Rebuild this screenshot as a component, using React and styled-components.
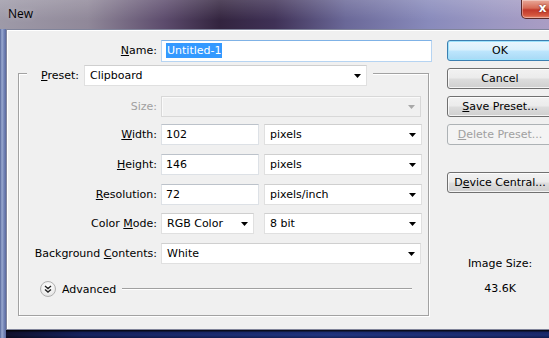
import React from 'react'
import styled, { createGlobalStyle, css } from 'styled-components'

const GlobalStyle = createGlobalStyle`
  html, body { margin: 0; padding: 0; overflow: hidden; }
  body { font-family: "DejaVu Sans", sans-serif; font-size: 11px; color: #000; }
  * { box-sizing: border-box; }
`

const Arrow = ({ disabled }) => (
  <svg width="7" height="4" viewBox="0 0 7 4">
    <polygon points="0,0 7,0 3.5,4" fill={disabled ? '#a8a8a8' : '#000'} />
  </svg>
)

const ChevronsDown = () => (
  <svg width="8" height="8" viewBox="0 0 8 8">
    <path d="M1 1 L4 3.5 L7 1 M1 4.5 L4 7 L7 4.5" fill="none" stroke="#222" strokeWidth="1.4" />
  </svg>
)

export default function App() {
  return (
    <>
      <GlobalStyle />
      <Window>
        <TitleBar>
          <Title>New</Title>
          <CloseButton>
            <CloseX>x</CloseX>
          </CloseButton>
        </TitleBar>
        <Client>
          <Form>
            <Row>
              <Label $w={150}><u>N</u>ame:</Label>
              <TextBox $w={271} $h={22} $focus>
                <Selected>Untitled-1</Selected>
              </TextBox>
            </Row>

            <Group>
              <GroupHeader>
                <span><u>P</u>reset:</span>
                <Select $w={283}>
                  <span>Clipboard</span>
                  <Arrow />
                </Select>
              </GroupHeader>

              <Row $top={10}>
                <Label $w={138} $disabled>Size:</Label>
                <Select $w={260} $disabled>
                  <span />
                  <Arrow disabled />
                </Select>
              </Row>
              <Row $top={7}>
                <Label $w={138}><u>W</u>idth:</Label>
                <TextBox $w={98}>102</TextBox>
                <Select $w={158} $gap={5}>
                  <span>pixels</span>
                  <Arrow />
                </Select>
              </Row>
              <Row $top={9}>
                <Label $w={138}><u>H</u>eight:</Label>
                <TextBox $w={98}>146</TextBox>
                <Select $w={158} $gap={5}>
                  <span>pixels</span>
                  <Arrow />
                </Select>
              </Row>
              <Row $top={9}>
                <Label $w={138}><u>R</u>esolution:</Label>
                <TextBox $w={98}>72</TextBox>
                <Select $w={158} $gap={5}>
                  <span>pixels/inch</span>
                  <Arrow />
                </Select>
              </Row>
              <Row $top={8}>
                <Label $w={138}>Color <u>M</u>ode:</Label>
                <Select $w={93}>
                  <span>RGB Color</span>
                  <Arrow />
                </Select>
                <Select $w={158} $gap={10}>
                  <span>8 bit</span>
                  <Arrow />
                </Select>
              </Row>
              <Row $top={9}>
                <Label $w={138}>Background <u>C</u>ontents:</Label>
                <Select $w={260}>
                  <span>White</span>
                  <Arrow />
                </Select>
              </Row>

              <Advanced>
                <RoundToggle><ChevronsDown /></RoundToggle>
                <span>Advanced</span>
                <Rule />
              </Advanced>
            </Group>
          </Form>

          <Side>
            <Button $default>OK</Button>
            <Button>Cancel</Button>
            <Button><u>S</u>ave Preset...</Button>
            <Button disabled><u>D</u>elete Preset...</Button>
            <Button $top={20}>D<u>e</u>vice Central...</Button>
            <Info>
              <InfoLine>Image Size:</InfoLine>
              <InfoLine $top={12}>43.6K</InfoLine>
            </Info>
          </Side>
        </Client>
      </Window>
    </>
  )
}

const Window = styled.div`
width: 549px;
height: 338px;
overflow: hidden;
display: flex;
flex-direction: column;
padding-bottom: 8px;
background:
  linear-gradient(90deg, #55669a 0, #9aaad0 2px, #7484b6 4px, #5a6aa0 6px) left top / 6px 100% no-repeat,
  linear-gradient(180deg, #1c1d28 0, #1c1d28 1px, #4c62a2 2px, #5f78b8 5px, #3c4c80 8px) left bottom / 100% 8px no-repeat,
  linear-gradient(90deg, #2c2038 0, #3c4c86 15%, #5a72b2 60%, #4a5c9a 100%) left bottom / 100% 8px no-repeat,
  #6676a8;
background-blend-mode: normal, multiply, normal, normal;
`
const TitleBar = styled.div`
height: 29px;
flex-shrink: 0;
display: flex;
justify-content: space-between;
align-items: flex-start;
background:
  linear-gradient(180deg, rgba(255, 255, 255, 0.16), rgba(255, 255, 255, 0) 70%),
  linear-gradient(90deg, #9e9aa8 0%, #908899 16%, #5c4b6c 30%, #33243f 40%, #3f3156 50%, #6a6898 63%, #888abb 78%, #9b97c2 90%, #aa9dc4 100%);
`
const Title = styled.span`
font-family: "Open Sans", "DejaVu Sans", sans-serif;
font-size: 12px;
line-height: 16px;
padding: 6px 0 0 8px;
color: #000;
text-shadow: 0 0 6px rgba(255, 255, 255, 0.35);
`
const CloseButton = styled.div`
width: 43px;
height: 19px;
flex-shrink: 0;
margin-right: -15px;
border: 1px solid #5a2a2a;
border-top: none;
border-radius: 0 0 5px 5px;
background: linear-gradient(180deg, #e9a99a 0%, #d66a55 45%, #c1382a 55%, #d4563e 85%, #e88a70 100%);
box-shadow: inset 0 0 0 1px rgba(255, 255, 255, 0.35);
display: flex;
align-items: center;
justify-content: center;
`
const CloseX = styled.span`
font-family: "DejaVu Sans", sans-serif;
font-weight: bold;
font-size: 12px;
line-height: 12px;
color: #fff;
margin-top: -2px;
text-shadow: 0 0 2px #5a1a10;
`
const Client = styled.div`
flex: 1;
width: 560px;
flex-shrink: 0;
margin-left: 6px;
display: flex;
background: #f0f0f0;
border: 1px solid #80849a;
box-shadow: inset 1px 1px 0 #ffffff;
`
const Form = styled.div`
width: 440px;
flex-shrink: 0;
padding-top: 10px;
display: flex;
flex-direction: column;
`
const Row = styled.div`
display: flex;
align-items: center;
height: 21px;
margin-top: ${(p) => p.$top || 0}px;
`
const Label = styled.label`
width: ${(p) => p.$w}px;
flex-shrink: 0;
margin-right: 4px;
text-align: right;
white-space: nowrap;
color: ${(p) => (p.$disabled ? '#a0a0a0' : '#000')};
`
const fieldBox = css`
height: ${(p) => p.$h || 21}px;
width: ${(p) => p.$w}px;
flex-shrink: 0;
margin-left: ${(p) => p.$gap || 0}px;
display: flex;
align-items: center;
white-space: nowrap;
background: #fff;
border: 1px solid #dde1e6;
border-top-color: #bcc2ca;
`
const TextBox = styled.div`
${fieldBox}
padding-left: 4px;
${(p) => p.$focus && css`
  border-color: #b6d4f2;
  border-top-color: #7fb2e6;
`}
`
const Selected = styled.span`
background: #3399ff;
color: #fff;
padding: 1px 1px;
line-height: 13px;
`
const Select = styled.div`
${fieldBox}
justify-content: space-between;
padding: 0 5px 0 5px;
border-color: #e0e0e0;
border-top-color: #cfcfcf;
${(p) => p.$disabled && css`
  background: #f0f0f0;
  border-color: #d8d8d8;
  box-shadow: inset 1px 1px 0 #fafafa;
`}
`
const Group = styled.div`
margin: 12px 0 0 11px;
width: 411px;
height: 243px;
border: 1px solid #a2a2a2;
box-shadow: inset 1px 1px 0 #ffffff, 1px 1px 0 #ffffff;
display: flex;
flex-direction: column;
`
const GroupHeader = styled.div`
align-self: flex-start;
margin: -9px 0 0 8px;
padding: 0 6px 0 14px;
display: flex;
align-items: center;
gap: 5px;
height: 21px;
background: #f0f0f0;
`
const Advanced = styled.div`
margin-top: 17px;
height: 16px;
padding: 0 16px 0 21px;
display: flex;
align-items: center;
gap: 6px;
`
const RoundToggle = styled.span`
width: 16px;
height: 16px;
flex-shrink: 0;
border-radius: 50%;
border: 1px solid #b0b0b0;
background: radial-gradient(circle at 50% 35%, #ffffff 0%, #f2f2f2 50%, #d8d8d8 100%);
display: flex;
align-items: center;
justify-content: center;
`
const Rule = styled.span`
flex: 1;
height: 2px;
border-top: 1px solid #a0a0a0;
border-bottom: 1px solid #ffffff;
`
const Side = styled.div`
padding-top: 10px;
display: flex;
flex-direction: column;
gap: 7px;
`
const Button = styled.button`
width: 106px;
height: 21px;
flex-shrink: 0;
margin-top: ${(p) => p.$top || 0}px;
padding: 0;
font-family: "DejaVu Sans", sans-serif;
font-size: 11px;
color: #000;
border: 1px solid #707070;
border-radius: 3px;
background: linear-gradient(180deg, #f2f2f2 0%, #ebebeb 48%, #dddddd 52%, #cfcfcf 100%);
box-shadow: inset 0 0 0 1px rgba(255, 255, 255, 0.75);
${(p) => p.$default && css`
  border-color: #3c7fb1;
  background: linear-gradient(180deg, #eaf6fd 0%, #d9f0fc 48%, #bee6fd 52%, #a7d9f5 100%);
  box-shadow: inset 0 0 0 1px #9ee2fb;
`}
&:disabled {
  color: #a0a0a0;
  border-color: #adb2b5;
  background: #f4f4f4;
  box-shadow: none;
}
`
const Info = styled.div`
width: 106px;
margin-top: 57px;
display: flex;
flex-direction: column;
text-align: center;
`
const InfoLine = styled.div`
line-height: 13px;
margin-top: ${(p) => p.$top || 0}px;
`
